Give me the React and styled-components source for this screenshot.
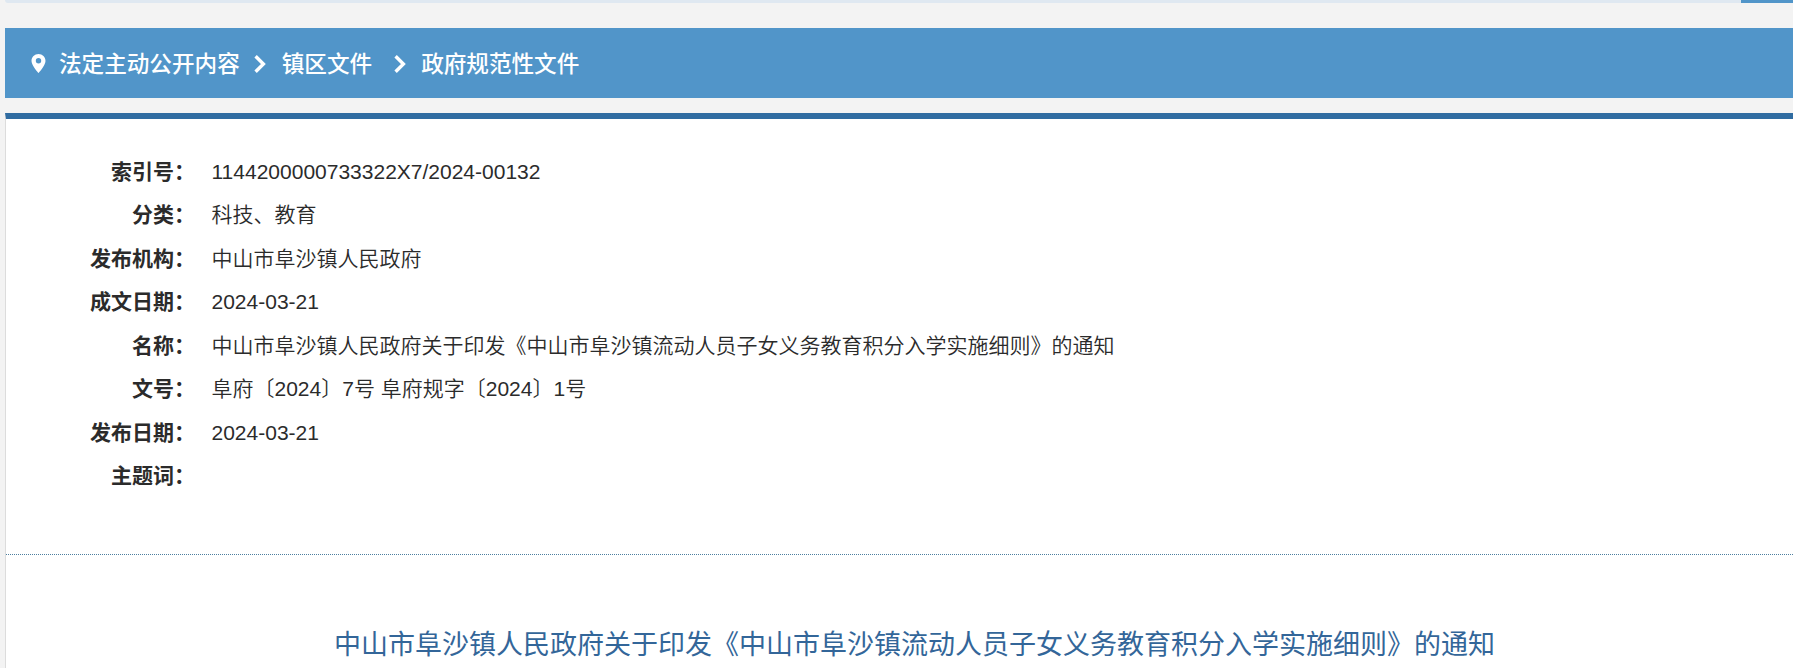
import React from "react";
import styled, { createGlobalStyle } from "styled-components";

const docTitle =
  "中山市阜沙镇人民政府关于印发《中山市阜沙镇流动人员子女义务教育积分入学实施细则》的通知";

const fields = [
  { label: "索引号：", value: "1144200000733322X7/2024-00132" },
  { label: "分类：", value: "科技、教育" },
  { label: "发布机构：", value: "中山市阜沙镇人民政府" },
  { label: "成文日期：", value: "2024-03-21" },
  { label: "名称：", value: docTitle },
  { label: "文号：", value: "阜府〔2024〕7号 阜府规字〔2024〕1号" },
  { label: "发布日期：", value: "2024-03-21" },
  { label: "主题词：", value: "" },
];

function Arrow({ before, after }) {
  return (
    <ArrowIcon $before={before} $after={after} viewBox="0 0 12 18">
      <path d="M1.6 1.2 L9.4 9 L1.6 16.8" />
    </ArrowIcon>
  );
}

function App() {
  return (
    <Page>
      <GlobalStyle />
      <SearchBar>
        <SearchButton />
      </SearchBar>
      <Breadcrumb>
        <PinIcon viewBox="0 0 14 19">
          <path
            fillRule="evenodd"
            d="M7 0C3.1 0 0 3 0 6.9C0 11.5 7 19 7 19S14 11.5 14 6.9C14 3 10.9 0 7 0ZM7 4A2.7 2.7 0 1 1 7 9.4A2.7 2.7 0 0 1 7 4Z"
          />
        </PinIcon>
        <Crumb>法定主动公开内容</Crumb>
        <Arrow before={14.5} after={15.5} />
        <Crumb>镇区文件</Crumb>
        <Arrow before={21.5} after={15.5} />
        <Crumb>政府规范性文件</Crumb>
      </Breadcrumb>
      <Article>
        <FieldList>
          {fields.map((field) => (
            <Field key={field.label}>
              <Label>{field.label}</Label>
              <Value>{field.value}</Value>
            </Field>
          ))}
        </FieldList>
        <Title>{docTitle}</Title>
      </Article>
    </Page>
  );
}

export default App;

const GlobalStyle = createGlobalStyle`
  * {
    box-sizing: border-box;
  }
  body {
    margin: 0;
    background-color: #f3f3f3;
    font-family: "Liberation Sans", "Noto Sans CJK SC", sans-serif;
  }
`;

const Page = styled.div`
  height: 668px;
  padding-left: 5px;
  overflow: hidden;
  background-color: #f3f3f3;
`;

const SearchBar = styled.div`
  display: flex;
  justify-content: flex-end;
  height: 3px;
  border-bottom-left-radius: 4px;
  background-color: #dfe8f1;
`;

const SearchButton = styled.div`
  width: 52px;
  background-color: #5195c9;
`;

const Breadcrumb = styled.nav`
  display: flex;
  align-items: center;
  height: 70px;
  margin-top: 25px;
  padding-left: 26px;
  background-color: #5195c9;
`;

const PinIcon = styled.svg`
  width: 15px;
  height: 19px;
  margin-right: 13px;
  fill: #fff;
`;

const Crumb = styled.span`
  padding-top: 3px;
  font-size: 22.6px;
  font-weight: 500;
  line-height: 32px;
  white-space: nowrap;
  color: #fff;
`;

const ArrowIcon = styled.svg`
  width: 12px;
  height: 18px;
  margin-left: ${(props) => props.$before}px;
  margin-right: ${(props) => props.$after}px;
  margin-top: 2px;
  fill: none;
  stroke: #fff;
  stroke-width: 3.4;
`;

const Article = styled.main`
  height: 600px;
  margin-top: 15px;
  border-top: 6px solid #306ca1;
  border-left: 1px solid #dcdcdc;
  background-color: #fff;
`;

const FieldList = styled.div`
  height: 436px;
  padding-top: 31px;
  border-bottom: 1px dotted #4d7f9f;
`;

const Field = styled.div`
  display: flex;
  height: 43.45px;
  font-size: 21px;
  line-height: 43.45px;
  color: #2b2b2b;
`;

const Label = styled.div`
  width: 189px;
  text-align: right;
  font-weight: bold;
`;

const Value = styled.div`
  margin-left: 16.5px;
  font-weight: 350;
  white-space: nowrap;
`;

const Title = styled.h1`
  margin: 70px 0 0;
  padding-left: 30px;
  text-align: center;
  font-size: 27px;
  font-weight: 400;
  line-height: 40px;
  white-space: nowrap;
  color: #336699;
`;
